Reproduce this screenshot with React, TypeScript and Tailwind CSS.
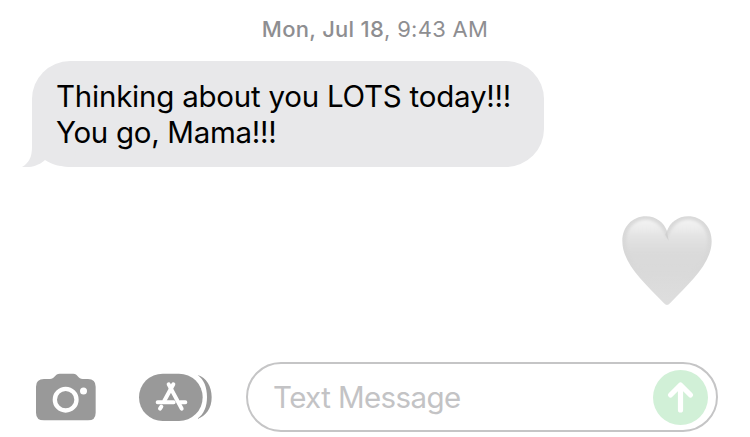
function Heart() {
  return (
    <svg className="h-[90px] w-[90px]" viewBox="36 32 270 270" aria-label="white heart">
      <defs>
        <linearGradient id="base" x1="0" y1="0" x2="0" y2="1">
          <stop offset="0" stopColor="#d9d9d9" />
          <stop offset="0.5" stopColor="#d8d8d8" />
          <stop offset="1" stopColor="#dedede" />
        </linearGradient>
        <linearGradient id="shine" x1="0" y1="0" x2="0" y2="1">
          <stop offset="0" stopColor="#f4f4f4" />
          <stop offset="0.25" stopColor="#e4e4e4" />
          <stop offset="0.5" stopColor="#dcdcdc" stopOpacity="0.7" />
          <stop offset="1" stopColor="#dadada" stopOpacity="0" />
        </linearGradient>
        <filter id="soft" x="-10%" y="-10%" width="120%" height="120%">
          <feGaussianBlur stdDeviation="4" />
        </filter>
      </defs>
      <path
        d="M171 77C162 52 138 33 108 33C66 33 37 65 37 108C37 172 98 228 162 294Q171 304 180 294C244 228 305 172 305 108C305 65 276 33 234 33C204 33 180 52 171 77Z"
        fill="url(#base)"
      />
      <g filter="url(#soft)" fill="url(#shine)">
        <path d="M167 92C156 62 136 43 108 43C73 43 49 70 49 108C50 155 90 200 130 235H171V100Z" />
        <path d="M175 92C186 62 206 43 234 43C269 43 293 70 293 108C292 155 252 200 212 235H171V100Z" />
      </g>
      <path d="M171 77L176 106Q170 97 166 88Z" fill="#d0d0d0" />
    </svg>
  );
}

function CameraIcon() {
  return (
    <svg className="h-12 w-[60px]" viewBox="33 39 180 144">
      <path
        d="M57 57H75C88 57 90 41 104 41H145C158 41 160 57 173 57H189Q212 57 212 80V158Q212 181 189 181H57Q33 181 33 158V80Q33 57 57 57Z"
        fill="#999"
      />
      <circle cx="122" cy="119" r="32.5" fill="none" stroke="#fff" strokeWidth="13" />
      <circle cx="175.500" cy="93" r="10.500" fill="#fff" />
    </svg>
  );
}

function AppsIcon() {
  return (
    <svg className="h-[49px] w-[73px]" viewBox="27 39 219 147">
      <path d="M203 45C229 53 245 78 245 112C245 145 228 169 201 177C222 163 231 140 231 111C231 82 222 59 203 45Z" fill="#999" />
      <rect x="27" y="41" width="191" height="142" rx="71" fill="#999" />
      <g fill="none" stroke="#fff" strokeWidth="12" strokeLinecap="round">
        <path d="M130 73L103 122" />
        <path d="M116 73L155 146" />
        <path d="M83 127H131M151 127H166" />
        <path d="M94 140L90 146" />
      </g>
    </svg>
  );
}

export default function App() {
  return (
    <main className="flex h-[437px] w-[750px] flex-col overflow-hidden bg-white font-['Inter','Liberation_Sans',sans-serif]">
      <div className="flex h-[61px] justify-center pt-[13px] text-[22px] leading-8 tracking-[0.28px] text-[#8e8e91]">
        <p className="whitespace-nowrap">
          <span className="font-medium">Mon, Jul 18</span>, 9:43 AM
        </p>
      </div>

      <div className="relative ml-8 h-[106px] w-[512px] rounded-[38px] bg-[#e8e8ea] pt-[17px] pl-6">
        <svg className="absolute bottom-0 -left-[11px] h-11 w-[60px]" viewBox="0 0 60 44">
          <path d="M11 0V24C11 34 8 40 1 44C10 45 19 42 24 37C32 42 40 44 52 44L60 0Z" fill="#e8e8ea" />
        </svg>
        <p className="relative text-[29.5px] leading-9 whitespace-nowrap text-black">
          <span className="tracking-[-0.23px]">Thinking about you LOTS today!!!</span>
          <br />
          <span className="tracking-[-0.3px]">You go, Mama!!!</span>
        </p>
      </div>

      <div className="flex justify-end pt-[49px] pr-[38px]">
        <Heart />
      </div>

      <div className="mt-auto mb-[5px] flex items-center pl-9">
        <CameraIcon />
        <div className="ml-[43px]">
          <AppsIcon />
        </div>
        <div className="ml-[34px] flex h-[70px] w-[472px] items-center justify-between rounded-full border-2 border-[#c5c5c6] pr-2 pl-[25px]">
          <span className="text-[29.5px] leading-9 tracking-[-0.6px] text-[#c3c3c5]">Text Message</span>
          <svg className="h-[55px] w-[55px]" viewBox="0 0 55 55">
            <circle cx="27.500" cy="27.500" r="27.500" fill="#d1f0d7" />
            <path d="M27.500 40V15M17.500 25L27.500 15L37.500 25" fill="none" stroke="#fff" strokeWidth="5.200" strokeLinecap="round" strokeLinejoin="round" />
          </svg>
        </div>
      </div>
    </main>
  );
}
